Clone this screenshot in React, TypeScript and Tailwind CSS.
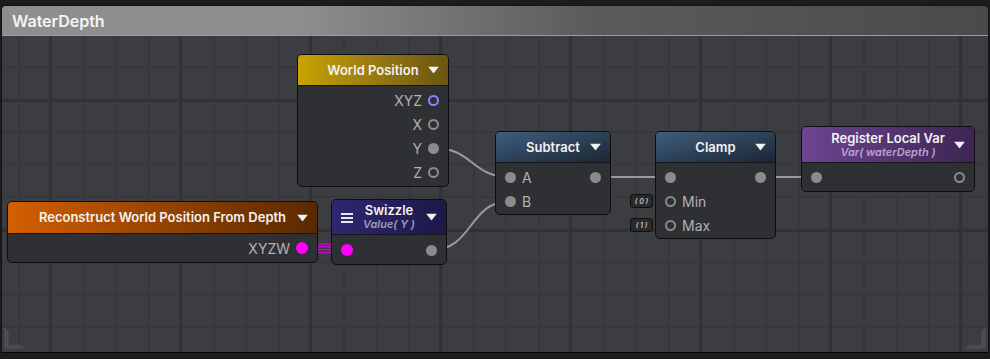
import React from "react";

type PortKind = "filled" | "hollow" | "blue" | "pink";

function Port({ kind }: { kind: PortKind }) {
  if (kind === "pink") return <span className="block w-[12px] h-[12px] shrink-0 rounded-full bg-[#ff00ff]" />;
  if (kind === "blue") return <span className="block w-[11px] h-[11px] shrink-0 rounded-full border-2 border-[#8787ff]" />;
  if (kind === "hollow") return <span className="block w-[11px] h-[11px] shrink-0 rounded-full border-2 border-[#8b8b8b]" />;
  return <span className="block w-[11px] h-[11px] shrink-0 rounded-full bg-[#8b8b8b]" />;
}

function Caret() {
  return (
    <svg width="11" height="7" viewBox="0 0 11 7" className="absolute right-[9px] top-1/2 -translate-y-1/2">
      <path d="M0 0 L11 0 L5.5 7 Z" fill="#f2f2f2" />
    </svg>
  );
}

function Node({
  className,
  header,
  title,
  subtitle,
  subColor,
  menu,
  children,
}: {
  className: string;
  header: string;
  title: string;
  subtitle?: string;
  subColor?: string;
  menu?: boolean;
  children: React.ReactNode;
}) {
  return (
    <div className={`absolute flex flex-col overflow-hidden rounded-[5px] border border-[#0e0e0f] bg-[#2f3033] ${className}`}>
      <div className={`relative flex flex-col items-center justify-center border-b border-[#161618] ${header}`}>
        {menu && (
          <div className="absolute left-[9px] top-[13px] flex flex-col gap-[2px]">
            <span className="block h-[2px] w-[12px] bg-[#e8e8f0]" />
            <span className="block h-[2px] w-[12px] bg-[#e8e8f0]" />
            <span className="block h-[2px] w-[12px] bg-[#e8e8f0]" />
          </div>
        )}
        <span className="text-[13px] font-semibold leading-[15px] text-[#f2f2f2]">{title}</span>
        {subtitle && (
          <span className={`text-[11px] font-semibold italic leading-[13px] ${subColor}`}>{subtitle}</span>
        )}
        <Caret />
      </div>
      {children}
    </div>
  );
}

function Row({ children, className = "" }: { children: React.ReactNode; className?: string }) {
  return <div className={`flex h-[24px] items-center gap-[6px] px-[9px] text-[14px] text-[#b2b2b2] ${className}`}>{children}</div>;
}

function ValueBox({ label, className }: { label: string; className: string }) {
  return (
    <div className={`absolute flex h-[14px] w-[23px] items-center justify-center whitespace-nowrap rounded-[3px] border border-[#0e0e0f] bg-[#2a2a2c] text-[7px] italic font-semibold leading-none text-[#c8c8c8] ${className}`}>
      {label}
    </div>
  );
}

export default function App() {
  return (
    <div className="relative h-[359px] w-[990px] overflow-hidden bg-[#1c1c1e] pl-[1px] pt-[5px] font-['Inter','Noto_Sans',sans-serif]">
      {/* group frame */}
      <div className="flex h-[348px] w-[988px] flex-col overflow-hidden rounded-t-[5px] border border-[#141416] border-b-[#050505]">
        <div className="flex h-[30px] shrink-0 items-center border-b border-[#9c9c9c] bg-gradient-to-r from-[#8e8e8e] from-30% via-[#5b5b5b] via-60% to-[#4a4a4a] px-[10px]">
          <span className="text-[16px] font-semibold text-[#f4f4f4]">WaterDepth</span>
        </div>
        <div className="relative flex-1 bg-[#3c3d40] bg-[image:linear-gradient(to_right,#313235_3px,transparent_3px),linear-gradient(to_bottom,#313235_3px,transparent_3px),linear-gradient(to_right,#37383b_2px,transparent_2px),linear-gradient(to_bottom,#37383b_2px,transparent_2px)] bg-[size:130px_130px,130px_130px,32.5px_32.5px,32.5px_32.5px] bg-[position:47px_0,0_63px,16px_0,0_30px]">
          {/* resize corners */}
          <svg width="24" height="24" viewBox="0 0 24 24" className="absolute bottom-[1px] left-[1px]">
            <path d="M1 1 L5 5 L5 18 L18 18 L22 22 L1 22 Z" fill="#4a4b4f" />
            <path d="M1 1 L5 5 L5 18" stroke="#56575b" strokeWidth="1" fill="none" />
          </svg>
          <svg width="24" height="24" viewBox="0 0 24 24" className="absolute bottom-[1px] right-[1px]">
            <path d="M23 1 L19 5 L19 18 L6 18 L2 22 L23 22 Z" fill="#4a4b4f" />
            <path d="M23 1 L19 5 L19 18" stroke="#56575b" strokeWidth="1" fill="none" />
          </svg>
        </div>
      </div>

      {/* wires */}
      <svg width="990" height="359" className="absolute left-0 top-0">
        <g fill="none" stroke="#9a9a9a" strokeWidth="2">
          <path d="M433 148 C 474 148, 470 177, 511 177" />
          <path d="M431 250 C 474 250, 468 201, 511 201" />
          <path d="M595 177 L671 177" />
          <path d="M760 177 L817 177" />
        </g>
        <g fill="none" stroke="#e000e0" strokeWidth="1.2">
          <path d="M302 248 C 316 242, 332 243, 348 250" />
          <path d="M302 248 C 316 246, 332 246, 348 250" />
          <path d="M302 248 C 316 250, 332 250, 348 250" />
          <path d="M302 248 C 316 254, 332 254, 348 250" />
        </g>
      </svg>

      {/* nodes */}
      <Node className="left-[297px] top-[54px] w-[152px]" header="h-[31px] bg-gradient-to-r from-[#c9a300] to-[#6b5512]" title="World Position">
        <div className="flex flex-col pb-[2px] pt-[2px]">
          <Row className="justify-end"><span>XYZ</span><Port kind="blue" /></Row>
          <Row className="justify-end"><span>X</span><Port kind="hollow" /></Row>
          <Row className="justify-end"><span>Y</span><Port kind="filled" /></Row>
          <Row className="justify-end"><span>Z</span><Port kind="hollow" /></Row>
        </div>
      </Node>

      <Node className="left-[7px] top-[201px] w-[311px]" header="h-[32px] bg-gradient-to-r from-[#d45f00] to-[#5a2900]" title="Reconstruct World Position From Depth">
        <div className="flex flex-col pb-[2px] pt-[2px]">
          <Row className="justify-end"><span>XYZW</span><Port kind="pink" /></Row>
        </div>
      </Node>

      <Node
        className="left-[331px] top-[199px] w-[116px]"
        header="h-[35px] bg-gradient-to-r from-[#2f2772] to-[#1c1847]"
        title="Swizzle"
        subtitle="Value( Y )"
        subColor="text-[#9c9cb8]"
        menu
      >
        <div className="flex flex-col pb-[2px] pt-[3px]">
          <Row className="justify-between"><Port kind="pink" /><Port kind="filled" /></Row>
        </div>
      </Node>

      <Node className="left-[495px] top-[131px] w-[116px]" header="h-[31px] bg-gradient-to-br from-[#3f5f80] to-[#1c2633]" title="Subtract">
        <div className="flex flex-col pb-[1px] pt-[2px]">
          <Row className="justify-between">
            <span className="flex items-center gap-[6px]"><Port kind="filled" />A</span>
            <Port kind="filled" />
          </Row>
          <Row><Port kind="filled" /><span>B</span></Row>
        </div>
      </Node>

      <Node className="left-[655px] top-[131px] w-[121px]" header="h-[31px] bg-gradient-to-br from-[#3f5f80] to-[#1c2633]" title="Clamp">
        <div className="flex flex-col pb-[1px] pt-[2px]">
          <Row className="justify-between"><Port kind="filled" /><Port kind="filled" /></Row>
          <Row><Port kind="hollow" /><span>Min</span></Row>
          <Row><Port kind="hollow" /><span>Max</span></Row>
        </div>
      </Node>

      <ValueBox label="( 0 )" className="left-[630px] top-[194px]" />
      <ValueBox label="( 1 )" className="left-[630px] top-[218px]" />

      <Node
        className="left-[801px] top-[126px] w-[174px]"
        header="h-[36px] bg-gradient-to-r from-[#6d4590] to-[#3e2554]"
        title="Register Local Var"
        subtitle="Var( waterDepth )"
        subColor="text-[#b9a3cc]"
      >
        <div className="flex flex-col pb-[2px] pt-[2px]">
          <Row className="justify-between"><Port kind="filled" /><Port kind="hollow" /></Row>
        </div>
      </Node>
    </div>
  );
}
